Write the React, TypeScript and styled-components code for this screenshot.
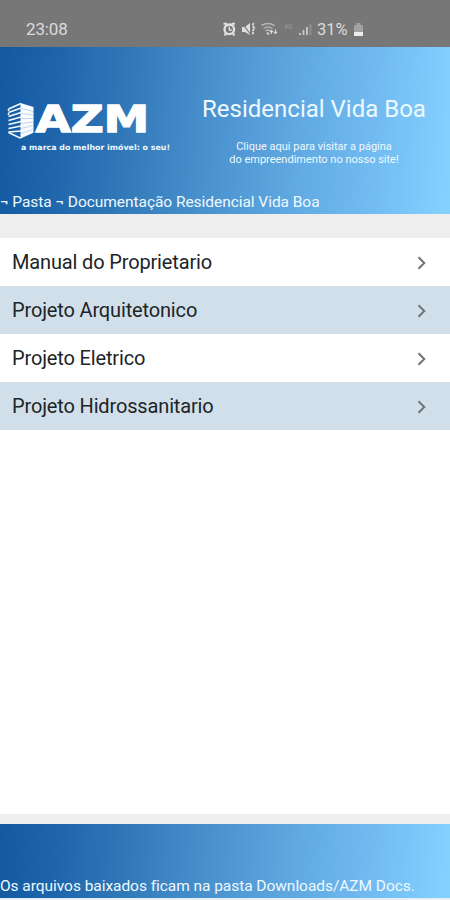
import React from "react";
import styled, { createGlobalStyle } from "styled-components";

const GlobalStyle = createGlobalStyle`
  body { margin: 0; background: #fff; font-family: Roboto, "Liberation Sans", sans-serif; }
  * { box-sizing: border-box; }
`;

const blueFade = "linear-gradient(95deg, #1259a1 0%, #1f66ad 14%, #3279b9 29%, #4a92ce 47%, #60a9e2 66%, #73bdf3 84%, #86d2ff 100%)";

const Screen = styled.div`
  width: 450px;
  height: 900px;
  display: flex;
  flex-direction: column;
  overflow: hidden;
  background: #fff;
`;

const StatusBar = styled.div`
  flex: none;
  height: 47px;
  padding: 12px 86px 0 26px;
  display: flex;
  justify-content: space-between;
  align-items: center;
  background: #777;
  color: #dcdcdc;
  font-size: 17px;
  line-height: 20px;
`;

const Clock = styled.span`
  margin-top: -1px;
  letter-spacing: -0.15px;
`;

const StatusIcons = styled.div`
  display: flex;
  align-items: center;
`;

const Battery = styled.span`
  width: 36px;
  font-size: 16.5px;
`;

const Header = styled.header`
  flex: none;
  height: 167px;
  display: flex;
  flex-direction: column;
  justify-content: space-between;
  background: ${blueFade};
  color: #eef9ff;
`;

const Brand = styled.div`
  display: flex;
  justify-content: space-between;
  padding: 48px 24px 0 6px;
`;

const Project = styled.div`
  width: 224px;
  display: flex;
  flex-direction: column;
  align-items: center;
`;

const Title = styled.h1`
  margin: 0;
  font-size: 24px;
  line-height: 28px;
  font-weight: 400;
  white-space: nowrap;
`;

const SiteLink = styled.p`
  margin: 17px 0 0;
  font-size: 11px;
  line-height: 13px;
  text-align: center;
  white-space: nowrap;
`;

const Breadcrumb = styled.nav`
  height: 22px;
  font-size: 15.5px;
  line-height: 21px;
  letter-spacing: -0.05px;
  white-space: nowrap;
`;

const Divider = styled.div<{ $height: number }>`
  flex: none;
  height: ${(p) => p.$height}px;
  background: #eee;
`;

const List = styled.ul`
  flex: 1;
  margin: 0;
  padding: 0;
  list-style: none;
`;

const Row = styled.li<{ $shaded: boolean }>`
  height: 48px;
  padding: 0 22px 0 12px;
  display: flex;
  align-items: center;
  justify-content: space-between;
  background: ${(p) => (p.$shaded ? "#d1dfeb" : "#fff")};
  color: #202427;
  font-size: 20px;
  letter-spacing: -0.15px;
`;

const Footer = styled.footer`
  flex: none;
  height: 74px;
  display: flex;
  align-items: flex-end;
  padding-bottom: 2px;
  background: ${blueFade};
  color: #eef9ff;
  font-size: 15.5px;
  line-height: 20px;
  letter-spacing: -0.05px;
  white-space: nowrap;
`;

const BottomEdge = styled.div`
  flex: none;
  height: 2px;
  background: #e6eff5;
`;

const AzmLogo = () => (
  <svg width="168" height="62" viewBox="6 95 168 62" role="img">
    <g stroke="#f4faff" fill="none" strokeWidth="1.5">
      <path d="M21 103.500 8.500 109M21 108 8.500 112.500M21 112.500 8.500 116.500M21 117 8.500 120.500M21 121.500 8.500 124.500M21 126 8.500 128.500M21 131 8.500 132" />
      <path d="M8.500 132.500 20 138 33 132" />
      <path d="M8.500 109v2M8.500 113v2" />
    </g>
    <path d="M20.500 103 33.500 107V132.500L20.500 137.500Z" fill="#f8fcff" />
    <path d="M21 108.500l12 3M21 113.500l12 1.500M21 118.500h12M21 123.500l12-1.500M21 128.500l12-3M21 133.500l12-4" stroke="#a9c6e2" strokeWidth=".7" />
    <text x="35.500" y="132" fontFamily="DejaVu Sans" fontWeight="700" fontSize="37.500" textLength="113.500" lengthAdjust="spacingAndGlyphs" fill="#fff" stroke="#fff" strokeWidth="1.300">AZM</text>
    <text x="21" y="150.300" fontFamily="DejaVu Sans" fontWeight="700" fontSize="7.600" textLength="149" lengthAdjust="spacingAndGlyphs" fill="#eef8ff">a marca do melhor imóvel: o seu!</text>
  </svg>
);

const StatusGlyphs = () => (
  <svg width="95" height="20" viewBox="222 20 95 20" fill="none">
    <path d="M223.500 23.800h3.500M231.500 23.800h3.500M224 34.500h2.500M232.500 34.500h2.500" stroke="#e2e2e2" strokeWidth="2" />
    <circle cx="229.300" cy="29.300" r="4.800" stroke="#e2e2e2" strokeWidth="2.300" />
    <path d="M229.300 26.500v3.500h2.500" stroke="#e2e2e2" strokeWidth="1.300" />
    <path d="M242 27h3l5-4v12l-5-3h-3z" fill="#dedede" />
    <path d="M242 23l9 12" stroke="#777" strokeWidth="1.200" />
    <path d="M253.500 23l-1 3 2 2-2 3 1 4" stroke="#d8d8d8" strokeWidth="1.800" strokeDasharray="2.500 1" />
    <path d="M261.500 25.500q6.500-4 13 0M263.500 28.500q4.500-3 9 0M265.500 31q2.500-2 5 0" stroke="#b4b4b4" strokeWidth="1.500" />
    <path d="M267 32.500l2 2" stroke="#ccc" strokeWidth="2" />
    <path d="M271.500 34v-3M270 32l1.500-1.500 1.500 1.500M275.500 29.500v4M274 32l1.500 1.500 1.500-1.500" stroke="#d8d8d8" strokeWidth="1.100" />
    <text x="284" y="28.500" fontFamily="Roboto" fontSize="7" fill="#989898">4G</text>
    <path d="M300 35v-2M303.500 35v-5M307 35v-8" stroke="#c9c9c9" strokeWidth="1.800" />
    <path d="M310.500 35V24" stroke="#929292" strokeWidth="1.800" />
  </svg>
);

const BatteryGlyph = () => (
  <svg width="11" height="14" viewBox="0 0 11 14">
    <path d="M3.500 0h4v2H10v7H1V2h2.500z" fill="#a2a2a2" />
    <path d="M1 9h9v4H1z" fill="#ececec" />
  </svg>
);

const Chevron = () => (
  <svg width="12" height="16" viewBox="0 0 12 16" fill="none">
    <path d="M2.500 3.200 8.300 9 2.500 14.800" stroke="#707477" strokeWidth="2" />
  </svg>
);

const folders = [
  "Manual do Proprietario",
  "Projeto Arquitetonico",
  "Projeto Eletrico",
  "Projeto Hidrossanitario",
];

export default function App() {
  return (
    <Screen>
      <GlobalStyle />
      <StatusBar>
        <Clock>23:08</Clock>
        <StatusIcons>
          <StatusGlyphs />
          <Battery>31%</Battery>
          <BatteryGlyph />
        </StatusIcons>
      </StatusBar>
      <Header>
        <Brand>
          <AzmLogo />
          <Project>
            <Title>Residencial Vida Boa</Title>
            <SiteLink>
              Clique aqui para visitar a página
              <br />
              do empreendimento no nosso site!
            </SiteLink>
          </Project>
        </Brand>
        <Breadcrumb>¬ Pasta ¬ Documentação Residencial Vida Boa</Breadcrumb>
      </Header>
      <Divider $height={24} />
      <List>
        {folders.map((folder, index) => (
          <Row key={folder} $shaded={index % 2 === 1}>
            <span>{folder}</span>
            <Chevron />
          </Row>
        ))}
      </List>
      <Divider $height={10} />
      <Footer>Os arquivos baixados ficam na pasta Downloads/AZM Docs.</Footer>
      <BottomEdge />
    </Screen>
  );
}
